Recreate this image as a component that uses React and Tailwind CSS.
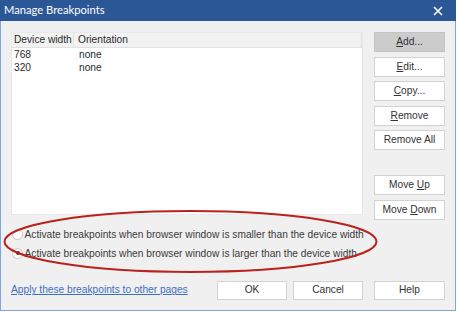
import React from "react";

const font = { fontFamily: '"Liberation Sans", Arial, sans-serif' };

function Btn({ children, w = "w-[71px]", h = "h-[20px]", gray = false }) {
  return (
    <div
      className={`${w} ${h} flex items-center justify-center text-[10.2px] text-[#333] border ${
        gray ? "bg-[#cccccc] border-[#c4c4c4]" : "bg-white border-[#d2d2d2]"
      }`}
    >
      <span className="whitespace-pre">{children}</span>
    </div>
  );
}

function U({ children }) {
  return <span className="underline underline-offset-[1px]">{children}</span>;
}

function Radio({ checked }) {
  return (
    <div className="w-[11px] h-[11px] shrink-0 rounded-full bg-white border border-[#c8c8c8] flex items-center justify-center">
      {checked && <div className="w-[4px] h-[4px] rounded-full bg-[#333]" />}
    </div>
  );
}

export default function App() {
  return (
    <div className="w-[458px] h-[313px] bg-white relative" style={font}>
      <div className="w-[456px] flex flex-col">
        <div className="h-[21px] bg-[#2b5797] flex items-center justify-between pl-[4px] pr-[13px]">
          <span className="text-white text-[11.2px]" style={{ fontFamily: 'Lato, "Noto Sans", sans-serif' }}>
            Manage Breakpoints
          </span>
          <svg width="10" height="10" viewBox="0 0 10 10">
            <path d="M1 1L9 9M9 1L1 9" stroke="white" strokeWidth="1.6" />
          </svg>
        </div>
        <div className="h-[290px] bg-[#f0f0f0] border-x border-b border-[#7ea6dc] pl-[10px] pr-[10px] pt-[11px] flex flex-col">
          <div className="flex gap-[11px]">
            <div className="w-[352px] h-[183px] bg-white border border-[#e8e8e8] flex flex-col text-[10.2px] text-[#2b2b2b] whitespace-nowrap">
              <div className="h-[15px] flex bg-[#f2f2f2] border-b border-[#e2e2e2]">
                <div className="w-[62px] pl-[2px] border-r border-[#e2e2e2] flex items-center">Device width</div>
                <div className="flex-1 pl-[4px] flex items-center border-r border-[#e2e2e2]">Orientation</div>
              </div>
              <div className="h-[13px] flex items-center">
                <div className="w-[62px] pl-[2px]">768</div>
                <div className="pl-[5px]">none</div>
              </div>
              <div className="h-[13px] flex items-center">
                <div className="w-[62px] pl-[2px]">320</div>
                <div className="pl-[5px]">none</div>
              </div>
            </div>
            <div className="flex flex-col gap-[4.5px]">
              <Btn gray><U>A</U>dd...</Btn>
              <Btn><U>E</U>dit...</Btn>
              <Btn><U>C</U>opy...</Btn>
              <Btn><U>R</U>emove</Btn>
              <Btn>Remove All</Btn>
              <div className="h-[16px]" />
              <Btn>{"Move "}<U>U</U>p</Btn>
              <Btn>{"Move "}<U>D</U>own</Btn>
            </div>
          </div>
          <div className="mt-[6px] flex flex-col text-[10.2px] text-[#3a3a3a] whitespace-nowrap">
            <div className="h-[18.5px] flex items-center gap-[1.5px] pl-[1px]">
              <Radio />
              <span>Activate breakpoints when browser window is smaller than the device width</span>
            </div>
            <div className="h-[18.5px] flex items-center gap-[1.5px] pl-[1px]">
              <Radio checked />
              <span>Activate breakpoints when browser window is larger than the device width</span>
            </div>
          </div>
          <div className="mt-[18px] flex items-center">
            <span className="text-[10.2px] text-[#3c6fc4] underline underline-offset-[1px] whitespace-nowrap">
              Apply these breakpoints to other pages
            </span>
            <div className="ml-auto flex gap-[6px]">
              <Btn w="w-[70px]" h="h-[19px]">OK</Btn>
              <Btn w="w-[70px]" h="h-[19px]">Cancel</Btn>
            </div>
            <div className="ml-[11px]">
              <Btn h="h-[19px]">Help</Btn>
            </div>
          </div>
        </div>
      </div>
      <svg className="absolute left-0 top-0 pointer-events-none" width="458" height="313">
        <ellipse cx="190.5" cy="241.5" rx="186" ry="30.5" fill="none" stroke="#b9231d" strokeWidth="2" />
      </svg>
    </div>
  );
}
